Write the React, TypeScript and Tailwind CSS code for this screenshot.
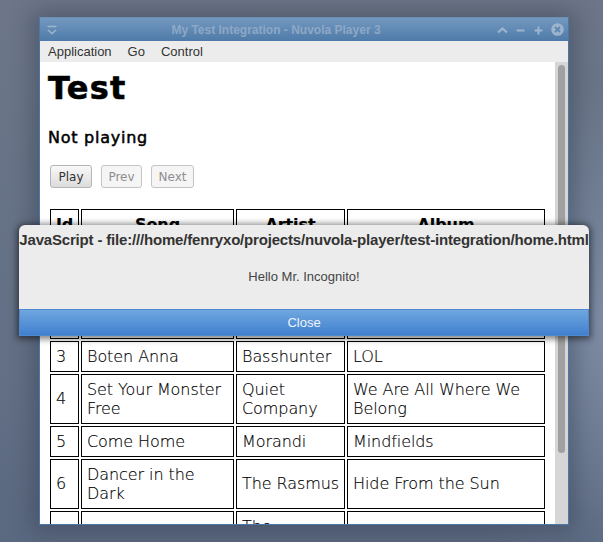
import React from "react";

type Row = { id: string; song: string; artist: string; album: string; h: string; nowrap?: boolean; lift?: string[] };

const rows: Row[] = [
  { id: "1", song: "Surrender", artist: "Cheap Trick", album: "Heaven Tonight", h: "h-[50px]" },
  { id: "2", song: "Hello", artist: "Adele", album: "25", h: "h-[45px]" },
  { id: "3", song: "Boten Anna", artist: "Basshunter", album: "LOL", h: "h-[31px]" },
  { id: "4", song: "Set Your Monster Free", artist: "Quiet Company", album: "We Are All Where We Belong", h: "h-[50px]", lift: ["id"] },
  { id: "5", song: "Come Home", artist: "Morandi", album: "Mindfields", h: "h-[31px]" },
  { id: "6", song: "Dancer in the Dark", artist: "The Rasmus", album: "Hide From the Sun", h: "h-[50px]", nowrap: true, lift: ["id", "artist", "album"] },
  { id: "7", song: "Another Song", artist: "The Temptations", album: "Help", h: "h-[50px]" },
];

const tdCls = "border border-black px-[5px] pt-0 align-middle";

function cellCls(r: Row, key: string) {
  const lifted = r.lift && r.lift.includes(key);
  const base = lifted ? tdCls + " pb-[2px]" : tdCls + " pb-0";
  return key === "artist" && r.nowrap ? base + " whitespace-nowrap" : base;
}

export default function App() {
  return (
    <div className="relative w-[603px] h-[542px] overflow-hidden bg-[radial-gradient(circle_at_100%_60%,#7c8ba3_0%,transparent_35%),linear-gradient(#6c7688,#626f85_70%,#5a6880)] pt-[17px] pl-[39px] font-['DejaVu_Sans',sans-serif]">
      <div className="w-[530px] h-[508px] flex flex-col rounded-t-[2px] border border-t-0 border-[#4a78ab] bg-white shadow-[0_0_22px_6px_rgba(40,50,65,0.4)]">
        <div className="h-[24px] shrink-0 flex items-center pl-[6px] pr-[4px] bg-[linear-gradient(#7298bf,#4f7ba9)] border-t border-[#6a8fb5] font-['Liberation_Sans',sans-serif] text-[#8ea8c6]">
          <svg width="12" height="12" viewBox="0 0 12 12" fill="none" stroke="#9db4cf" strokeWidth="1.6">
            <path d="M1.5 2.5h9" />
            <path d="M2 6l4 3.5L10 6" />
          </svg>
          <div className="flex-1 text-center text-[12px] font-bold pr-[3px]">My Test Integration - Nuvola Player 3</div>
          <div className="flex items-center gap-[7px]">
            <svg width="11" height="12" viewBox="0 0 11 12" fill="none" stroke="#9db4cf" strokeWidth="2.2"><path d="M1 8.5L5.5 4.5l4.5 4" /></svg>
            <svg width="11" height="12" viewBox="0 0 11 12" fill="none" stroke="#9db4cf" strokeWidth="2"><path d="M1.5 6.5h8" /></svg>
            <svg width="11" height="12" viewBox="0 0 11 12" fill="none" stroke="#9db4cf" strokeWidth="2"><path d="M1.5 6.5h8M5.5 2.5v8" /></svg>
            <svg width="13" height="13" viewBox="0 0 13 13" fill="none"><circle cx="6.5" cy="6.5" r="6.3" fill="#9db4cf" /><path d="M4 4l5 5M9 4l-5 5" stroke="#5f86b0" strokeWidth="1.8" /></svg>
          </div>
        </div>
        <div className="h-[21px] shrink-0 flex items-center gap-[16px] pl-[8px] bg-[#ececec] font-['Liberation_Sans',sans-serif] text-[13px] text-[#333]">
          <span>Application</span>
          <span>Go</span>
          <span>Control</span>
        </div>
        <div className="flex-1 min-h-0 flex">
          <div className="flex-1 min-w-0 overflow-hidden pl-[8px] text-black">
            <h1 className="text-[32px] leading-[37px] font-bold mt-[8px] tracking-[1.2px] [-webkit-text-stroke:0.6px_black]">Test</h1>
            <h2 className="text-[16px] leading-[19px] font-normal mt-[21px] tracking-[0.75px] [-webkit-text-stroke:0.5px_black]">Not playing</h2>
            <div className="flex mt-[18px] ml-[2px] text-[12px]">
              <button className="w-[42px] h-[23px] rounded-[3px] border border-[#b5b5b5] bg-[linear-gradient(#f8f8f8,#dcdcdc)] text-[#333]">Play</button>
              <button className="w-[41px] h-[23px] ml-[9px] rounded-[3px] border border-[#c4c4c4] bg-[#f5f5f5] text-[#8e8e8e]">Prev</button>
              <button className="w-[43px] h-[23px] ml-[9px] rounded-[3px] border border-[#c4c4c4] bg-[#f5f5f5] text-[#8e8e8e]">Next</button>
            </div>
            <table className="mt-[19px] w-[497px] table-fixed border-separate border-spacing-[2px] text-[16px] leading-[19px] font-extralight tracking-[-0.08px] [-webkit-text-stroke:0.15px_black]">
              <colgroup>
                <col className="w-[29px]" />
                <col className="w-[153px]" />
                <col className="w-[109px]" />
                <col className="w-[198px]" />
              </colgroup>
              <thead>
                <tr className="h-[31px]">
                  <th className={tdCls + " pb-0 font-bold text-center"}>Id</th>
                  <th className={tdCls + " pb-0 font-bold text-center"}>Song</th>
                  <th className={tdCls + " pb-0 font-bold text-center"}>Artist</th>
                  <th className={tdCls + " pb-0 font-bold text-center"}>Album</th>
                </tr>
              </thead>
              <tbody>
                {rows.map((r) => (
                  <tr key={r.id} className={r.h}>
                    <td className={cellCls(r, "id")}>{r.id}</td>
                    <td className={cellCls(r, "song")}>{r.song}</td>
                    <td className={cellCls(r, "artist")}>{r.artist}</td>
                    <td className={cellCls(r, "album")}>{r.album}</td>
                  </tr>
                ))}
              </tbody>
            </table>
          </div>
          <div className="w-[13px] shrink-0 bg-[#d6d6d6] pt-[3px] pl-[3px]">
            <div className="w-[7px] h-[388px] rounded-full bg-[#a0a0a0]" />
          </div>
        </div>
      </div>

      <div className="absolute left-[19px] top-[225px] w-[570px] h-[111px] flex flex-col rounded-t-[6px] bg-[#ececec] shadow-[0_1px_6px_2px_rgba(0,0,0,0.5)] font-['Liberation_Sans',sans-serif] overflow-hidden">
        <div className="h-[30px] shrink-0 flex items-center justify-center whitespace-nowrap text-[15px] font-bold tracking-[-0.18px] text-[#333]">
          JavaScript - file:///home/fenryxo/projects/nuvola-player/test-integration/home.html
        </div>
        <div className="flex-1 flex items-center justify-center text-[13px] text-[#444] pb-[10px]">Hello Mr. Incognito!</div>
        <div className="h-[27px] shrink-0 flex items-center justify-center border border-[#4f8ad0] bg-[linear-gradient(#70a7e0,#4080cf)] text-[13px] text-[#eef4fb]">Close</div>
      </div>
    </div>
  );
}
